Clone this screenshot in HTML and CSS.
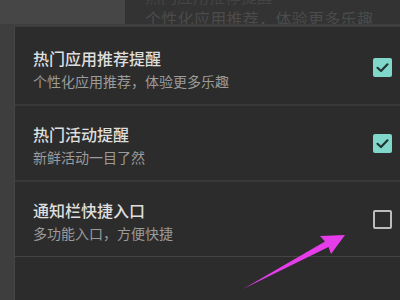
FILE: index.html
```html
<!DOCTYPE html>
<html lang="zh-CN">
<head>
<meta charset="utf-8">
<link rel="stylesheet" href="styles.css">
</head>
<body>
<div class="bg">
  <div class="bg-top">
    <div class="bg-left"></div>
    <div class="bg-right">
      <div class="ghost-title">热门应用推荐提醒</div>
      <div class="ghost-sub">个性化应用推荐，体验更多乐趣</div>
    </div>
  </div>
  <div class="bg-side"></div>
</div>
<div class="dialog">
  <div class="row">
    <div class="text">
      <div class="title">热门应用推荐提醒</div>
      <div class="sub">个性化应用推荐，体验更多乐趣</div>
    </div>
    <div class="box checked"><svg viewBox="0 0 19 19" width="19" height="19"><path d="M4.5 9.8 L8 13 L14.5 6.3" fill="none" stroke="#233532" stroke-width="2.2" stroke-linecap="round" stroke-linejoin="round"/></svg></div>
  </div>
  <div class="row">
    <div class="text">
      <div class="title">热门活动提醒</div>
      <div class="sub">新鲜活动一目了然</div>
    </div>
    <div class="box checked"><svg viewBox="0 0 19 19" width="19" height="19"><path d="M4.5 9.8 L8 13 L14.5 6.3" fill="none" stroke="#233532" stroke-width="2.2" stroke-linecap="round" stroke-linejoin="round"/></svg></div>
  </div>
  <div class="row last">
    <div class="text">
      <div class="title">通知栏快捷入口</div>
      <div class="sub">多功能入口，方便快捷</div>
    </div>
    <div class="box"></div>
  </div>
</div>
<svg class="arrow" viewBox="0 0 400 300" width="400" height="300">
  <polygon points="243,289 325,241.5 320,236 345,235 331,254 328.5,247" fill="#e43de9"/>
</svg>
</body>
</html>
```
FILE: styles.css
```css
html, body {
  margin: 0;
  padding: 0;
  width: 400px;
  height: 300px;
  overflow: hidden;
  background: #3d3d3d;
  font-family: "Noto Sans CJK SC", "Noto Sans", sans-serif;
}
.bg {
  width: 400px;
  height: 300px;
}
.bg-top {
  display: flex;
  height: 24px;
}
.bg-left {
  width: 125px;
  background: #464646;
}
.bg-right {
  flex: 1;
  background: #333333;
  padding-left: 20px;
  overflow: hidden;
}
.ghost-title {
  font-size: 16px;
  line-height: 16px;
  margin-top: -12px;
  color: #444444;
}
.ghost-sub {
  font-size: 16px;
  line-height: 18px;
  margin-top: 5px;
  color: #4b4b4b;
  letter-spacing: 0.3px;
}
.bg-side {
  height: 276px;
  width: 14px;
  background: #3e3e3e;
}
.dialog {
  position: absolute;
  left: 14px;
  top: 24px;
  right: 0;
  bottom: 0;
  background: #2c2c2c;
  border-top: 3px solid #3e3e3e;
  border-left: 1px solid #464646;
  padding-top: 3px;
}
.row {
  height: 74px;
  display: flex;
  align-items: center;
  justify-content: space-between;
  padding: 0 8px 0 18px;
  border-bottom: 2px solid #383838;
}
.row.last {
  border-bottom: 1px solid #444444;
}
.text {
  display: flex;
  flex-direction: column;
  gap: 4px;
  padding-top: 3px;
}
.title {
  font-size: 16px;
  line-height: 20px;
  color: #dedede;
  font-weight: 500;
}
.sub {
  font-size: 14px;
  line-height: 18px;
  color: #9b9b9b;
}
.box {
  width: 15px;
  height: 15px;
  border: 2px solid #bdbdbd;
  border-radius: 2px;
}
.box.checked {
  width: 19px;
  height: 19px;
  border: none;
  background: #7fd8c9;
}
.box svg {
  display: block;
}
.arrow {
  position: absolute;
  left: 0;
  top: 0;
}
```
